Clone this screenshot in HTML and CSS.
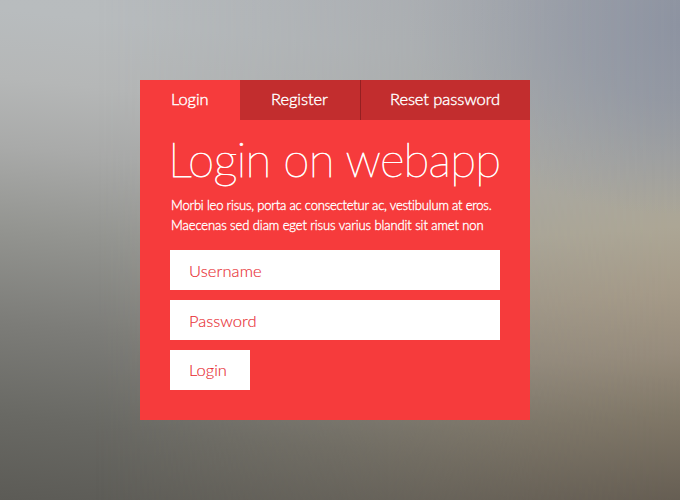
FILE: index.html
```html
<!DOCTYPE html>
<html lang="en">
<head>
<meta charset="utf-8">
<title>Login on webapp</title>
<link rel="stylesheet" href="styles.css">
</head>
<body>
<main class="card">
  <nav class="tabs">
    <a class="tab tab-login active">Login</a>
    <a class="tab tab-register">Register</a>
    <a class="tab tab-reset">Reset password</a>
  </nav>
  <form class="panel">
    <h1 class="title">Login on webapp</h1>
    <p class="intro"><span class="line">Morbi leo risus, porta ac consectetur ac, vestibulum at eros.</span><span class="line line-second">Maecenas sed diam eget risus varius blandit sit amet non</span></p>
    <input class="field username" type="text" placeholder="Username">
    <input class="field password" type="password" placeholder="Password">
    <button class="submit" type="button">Login</button>
  </form>
</main>
</body>
</html>
```
FILE: styles.css
```css
* { box-sizing: border-box; }

html { background: #777; }

body {
  position: relative;
  isolation: isolate;
  margin: 0;
  width: 680px;
  height: 500px;
  padding: 80px 0 0 140px;
  overflow: hidden;
  font-family: Lato, "Open Sans", sans-serif;
  background: linear-gradient(186deg, #b7bbbe 0%, #b8bcbe 14%, #b5b7b7 26%, #a9aaa9 38%, #949591 52%, #7c7c78 69%, #696964 85%, #5c5b56 100%);
}

body::before {
  content: "";
  position: absolute;
  inset: 0;
  z-index: -1;
  background:
    radial-gradient(ellipse 270px 190px at 100% 5%, #8d93a1 0%, rgba(141,147,161,.75) 40%, rgba(141,147,161,0) 100%),
    linear-gradient(176deg, #a0a3a9 0%, #a2a5a8 13%, #a3a5a4 25%, #a7a69f 37%, #aca695 50%, #a59a88 62%, #978c7c 73%, #817868 84%, #665e53 100%);
  mask-image: linear-gradient(90deg, transparent 14%, rgba(0,0,0,.4) 50%, rgba(0,0,0,.8) 78%, #000 100%);
}

.card {
  width: 390px;
  height: 340px;
  background: #f63b3c;
  color: #fff;
}

.tabs {
  display: grid;
  grid-template-columns: 100px 120px 170px;
  height: 40px;
}

.tab {
  padding-left: 31px;
  background: #c22d2e;
  font-size: 16.5px;
  font-weight: 300;
  letter-spacing: -.05px;
  line-height: 39px;
  white-space: nowrap;
  -webkit-text-stroke: .4px #fff;
}

.active { background: #f63b3c; }
.tab-reset { border-left: 1px solid #951f21; padding-left: 29px; letter-spacing: -.08px; }

.panel {
  display: flex;
  flex-direction: column;
  padding: 10px 30px 0;
}

.title {
  margin: 0 0 0 -2px;
  height: 66px;
  font-size: 47.5px;
  font-weight: 100;
  letter-spacing: -.8px;
  line-height: 57px;
  white-space: nowrap;
  -webkit-text-stroke: .75px #fff;
}

.intro {
  margin: 0;
  padding-left: 1px;
  height: 54px;
  font-size: 13px;
  font-weight: 300;
  letter-spacing: -.19px;
  line-height: 20px;
  -webkit-text-stroke: .35px #fff;
}

.line {
  display: block;
  margin-top: -1px;
  margin-bottom: 1px;
  white-space: nowrap;
}

.line-second { letter-spacing: -.09px; }

.field, .submit {
  height: 40px;
  margin: 0 0 10px;
  padding: 1px 19px 0;
  border: 0;
  border-radius: 0;
  background: #fff;
  color: #e92f35;
  font: 300 16.5px Lato, sans-serif;
  -webkit-text-stroke: .15px #e92f35;
}

.field { width: 330px; }
.username { letter-spacing: .1px; }
.field::placeholder { color: #e92f35; opacity: 1; }

.submit {
  width: 80px;
  padding-top: 0;
  text-align: left;
}
```
